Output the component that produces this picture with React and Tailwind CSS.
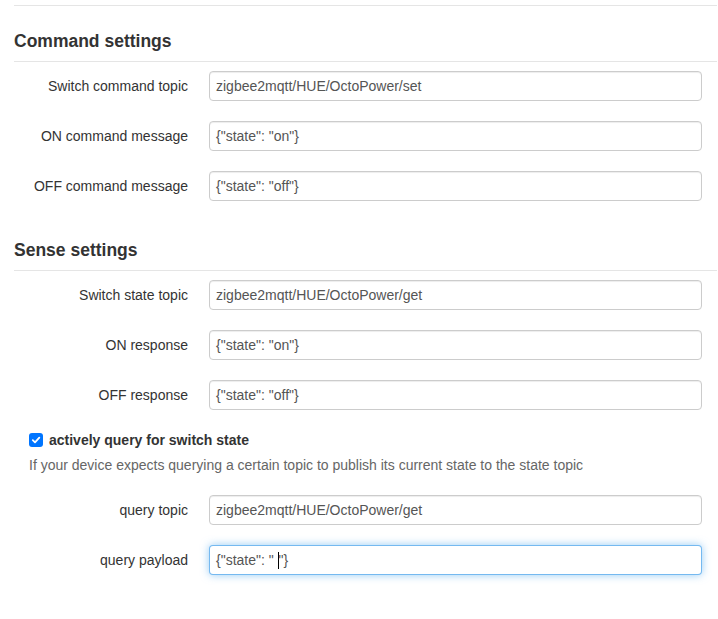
const Field = ({ label, value, focused }) => (
  <div className="flex items-center h-[30px] mb-[20px]">
    <label className="w-[174px] text-right text-[#333]">{label}</label>
    <div
      className={`ml-[21px] w-[493px] h-[30px] rounded-[4px] border px-[6px] flex items-center text-[#555] bg-white ${
        focused
          ? 'border-[rgba(82,168,236,0.8)] shadow-[0_0_8px_rgba(82,168,236,0.6)]'
          : 'border-[#ccc] shadow-[inset_0_1px_1px_rgba(0,0,0,0.075)]'
      }`}
    >
      {value}
    </div>
  </div>
)

const Legend = ({ children }) => (
  <div className="h-[41px] leading-[40px] border-b border-[#e5e5e5] text-[17.5px] font-bold text-[#333] mb-[9px]">
    {children}
  </div>
)

export default function App() {
  return (
    <div
      className="w-[718px] h-[619px] bg-white text-[14px] leading-[20px] overflow-hidden"
      style={{ fontFamily: '"Liberation Sans", Arial, sans-serif' }}
    >
      <div className="ml-[14px] mr-[1px] flex flex-col">
        <div className="h-[6px] border-b border-[#e5e5e5]" />

        {/* Command settings */}
        <div className="mt-[15px] flex flex-col">
          <Legend>Command settings</Legend>
          <Field label="Switch command topic" value="zigbee2mqtt/HUE/OctoPower/set" />
          <Field label="ON command message" value='{"state": "on"}' />
          <Field label="OFF command message" value='{"state": "off"}' />
        </div>

        {/* Sense settings */}
        <div className="mt-[9px] flex flex-col">
          <Legend>Sense settings</Legend>
          <Field label="Switch state topic" value="zigbee2mqtt/HUE/OctoPower/get" />
          <Field label="ON response" value='{"state": "on"}' />
          <Field label="OFF response" value='{"state": "off"}' />

          <div className="ml-[15px] flex flex-col">
            <label className="flex items-center h-[20px] font-bold text-[#333]">
              <span className="w-[14px] h-[14px] rounded-[3px] bg-[#0075ff] flex items-center justify-center mr-[6px]">
                <svg width="10" height="10" viewBox="0 0 10 10">
                  <path d="M1.8 5.2 L4 7.3 L8.3 2.6" fill="none" stroke="white" strokeWidth="1.8" strokeLinecap="round" strokeLinejoin="round" />
                </svg>
              </span>
              actively query for switch state
            </label>
            <p className="mt-[5px] mb-[20px] text-[#666]">
              If your device expects querying a certain topic to publish its current state to the state topic
            </p>
          </div>

          <Field label="query topic" value="zigbee2mqtt/HUE/OctoPower/get" />
          <Field
            label="query payload"
            focused
            value={
              <span className="flex items-center">
                <span className="whitespace-pre">{'{"state": " '}</span>
                <span className="inline-block w-[1px] h-[17px] bg-black" />
                <span>{'"}'}</span>
              </span>
            }
          />
        </div>
      </div>
    </div>
  )
}
